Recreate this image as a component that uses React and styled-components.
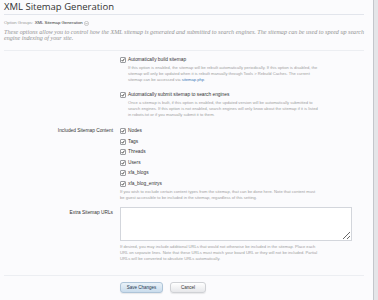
import React from "react";
import styled, { createGlobalStyle } from "styled-components";

const Global = createGlobalStyle`
  html, body { margin: 0; padding: 0; }
  body { background: #fbfbfd; font-family: "Liberation Sans", Arial, sans-serif; color: #333; }
`;

const Page = styled.div`
  display: flex;
  min-height: 100vh;
  overflow: hidden;
`;

const Main = styled.div`
  flex: 1;
  padding: 0 9px 0 4px;
  min-width: 0;
`;

const ScrollBar = styled.div`
  width: 4px;
  background: #e4e5e8;
  border-left: 1px solid #c4c6cb;
`;

const Title = styled.h1`
  margin: 0;
  font-family: "Open Sans", "Liberation Sans", sans-serif;
  font-weight: 400;
  font-size: 9.5px;
  line-height: 14px;
  color: #333;
  border-bottom: 1px solid #e2e5ec;
  white-space: nowrap;
`;

const Groups = styled.div`
  margin-top: 5px;
  font-size: 4.3px;
  line-height: 6px;
  color: #999;
  display: flex;
  align-items: center;
  gap: 1.5px;
  white-space: nowrap;
`;

const GroupName = styled.span`
  color: #333;
`;

const Intro = styled.p`
  margin: 3px 0 0;
  font-family: "Liberation Serif", "Times New Roman", serif;
  font-style: italic;
  font-size: 6.1px;
  line-height: 6px;
  color: #929292;
  white-space: nowrap;
`;

const Form = styled.div`
  margin-top: 9px;
  border-top: 1px solid #eceef2;
  padding-top: 6px;
`;

const Row = styled.div`
  display: grid;
  grid-template-columns: 109px 232px;
  column-gap: 7px;
  margin-top: ${(p) => p.$mt || 0}px;
`;

const Label = styled.div`
  text-align: right;
  font-size: 4.8px;
  line-height: 6px;
  color: #333;
  padding-top: ${(p) => p.$pt || 0}px;
  white-space: nowrap;
`;

const Controls = styled.div`
  display: flex;
  flex-direction: column;
`;

const CheckItem = styled.label`
  display: flex;
  align-items: center;
  gap: 2px;
  height: ${(p) => p.$h || 6}px;
  font-size: 4.8px;
  line-height: 6px;
  color: #333;
  white-space: nowrap;
`;

const Box = styled.span`
  width: 4px;
  height: 4px;
  border: 0.7px solid #9a9ca0;
  border-radius: 1px;
  background: #fff;
  display: inline-flex;
  align-items: center;
  justify-content: center;
  flex: none;
`;

const Hint = styled.div`
  font-size: 4.1px;
  line-height: 5.8px;
  color: #a0a0a0;
  margin-top: ${(p) => p.$mt || 0}px;
  padding-left: ${(p) => p.$indent || 0}px;
  white-space: nowrap;
`;

const Link = styled.span`
  color: #3a78b5;
`;

const TextArea = styled.textarea`
  box-sizing: border-box;
  width: 232px;
  height: 34px;
  border: 1px solid #d3d6dc;
  background: #fff;
  margin: 0;
  padding: 0;
  resize: vertical;
`;

const Footer = styled.div`
  margin-top: 14px;
  border-top: 1px solid #eceef2;
  padding-top: 6px;
`;

const Buttons = styled.div`
  display: flex;
  gap: 7px;
  padding-left: 116px;
`;

const Button = styled.button`
  box-sizing: border-box;
  height: 11px;
  width: ${(p) => p.$w}px;
  padding: 0;
  border-radius: 3px;
  font-family: "Liberation Sans", Arial, sans-serif;
  font-size: 4.5px;
  color: ${(p) => (p.$primary ? "#1f3550" : "#333")};
  border: 1px solid ${(p) => (p.$primary ? "#aec4d8" : "#cfd1d5")};
  background: ${(p) =>
    p.$primary
      ? "linear-gradient(#eaf2f9, #c9dcec)"
      : "linear-gradient(#ffffff, #e6e7ea)"};
  box-shadow: 0 1px 1px rgba(0, 0, 0, 0.08);
`;

const Check = () => (
  <Box>
    <svg width="4" height="4" viewBox="0 0 10 10">
      <path d="M1.5 5.2 L4 8 L8.8 1.5" fill="none" stroke="#222" strokeWidth="2" />
    </svg>
  </Box>
);

const GroupIcon = () => (
  <svg width="5" height="5" viewBox="0 0 10 10">
    <circle cx="5" cy="5" r="4.2" fill="#fff" stroke="#999" strokeWidth="1" />
    <path d="M3 4 L5 6.3 L7 4" fill="none" stroke="#777" strokeWidth="1" />
  </svg>
);

const contentItems = ["Nodes", "Tags", "Threads", "Users", "xfa_blogs", "xfa_blog_entrys"];

export default function App() {
  return (
    <>
      <Global />
      <Page>
        <Main>
          <Title>XML Sitemap Generation</Title>
          <Groups>
            Option Groups: <GroupName>XML Sitemap Generation</GroupName>
            <GroupIcon />
          </Groups>
          <Intro>
            These options allow you to control how the XML sitemap is generated and submitted to search engines. The sitemap can be used to speed up search
            <br />
            engine indexing of your site.
          </Intro>
          <Form>
            <Row>
              <Label />
              <Controls>
                <CheckItem>
                  <Check />
                  Automatically build sitemap
                </CheckItem>
                <Hint $mt={2} $indent={8}>
                  If this option is enabled, the sitemap will be rebuilt automatically periodically. If this option is disabled, the
                  <br />
                  sitemap will only be updated when it is rebuilt manually through Tools &gt; Rebuild Caches. The current
                  <br />
                  sitemap can be accessed via <Link>sitemap.php</Link>.
                </Hint>
              </Controls>
            </Row>
            <Row $mt={10}>
              <Label />
              <Controls>
                <CheckItem>
                  <Check />
                  Automatically submit sitemap to search engines
                </CheckItem>
                <Hint $mt={2} $indent={8}>
                  Once a sitemap is built, if this option is enabled, the updated version will be automatically submitted to
                  <br />
                  search engines. If this option is not enabled, search engines will only know about the sitemap if it is listed
                  <br />
                  in robots.txt or if you manually submit it to them.
                </Hint>
              </Controls>
            </Row>
            <Row $mt={8}>
              <Label $pt={2.3}>Included Sitemap Content</Label>
              <Controls>
                {contentItems.map((it) => (
                  <CheckItem key={it} $h={10.6}>
                    <Check />
                    {it}
                  </CheckItem>
                ))}
                <Hint>
                  If you wish to exclude certain content types from the sitemap, that can be done here. Note that content must
                  <br />
                  be guest accessible to be included in the sitemap, regardless of this setting.
                </Hint>
              </Controls>
            </Row>
            <Row $mt={6}>
              <Label $pt={3}>Extra Sitemap URLs</Label>
              <Controls>
                <TextArea />
                <Hint $mt={3}>
                  If desired, you may include additional URLs that would not otherwise be included in the sitemap. Place each
                  <br />
                  URL on separate lines. Note that these URLs must match your board URL or they will not be included. Partial
                  <br />
                  URLs will be converted to absolute URLs automatically.
                </Hint>
              </Controls>
            </Row>
          </Form>
          <Footer>
            <Buttons>
              <Button $primary $w={43}>Save Changes</Button>
              <Button $w={36}>Cancel</Button>
            </Buttons>
          </Footer>
        </Main>
        <ScrollBar />
      </Page>
    </>
  );
}
